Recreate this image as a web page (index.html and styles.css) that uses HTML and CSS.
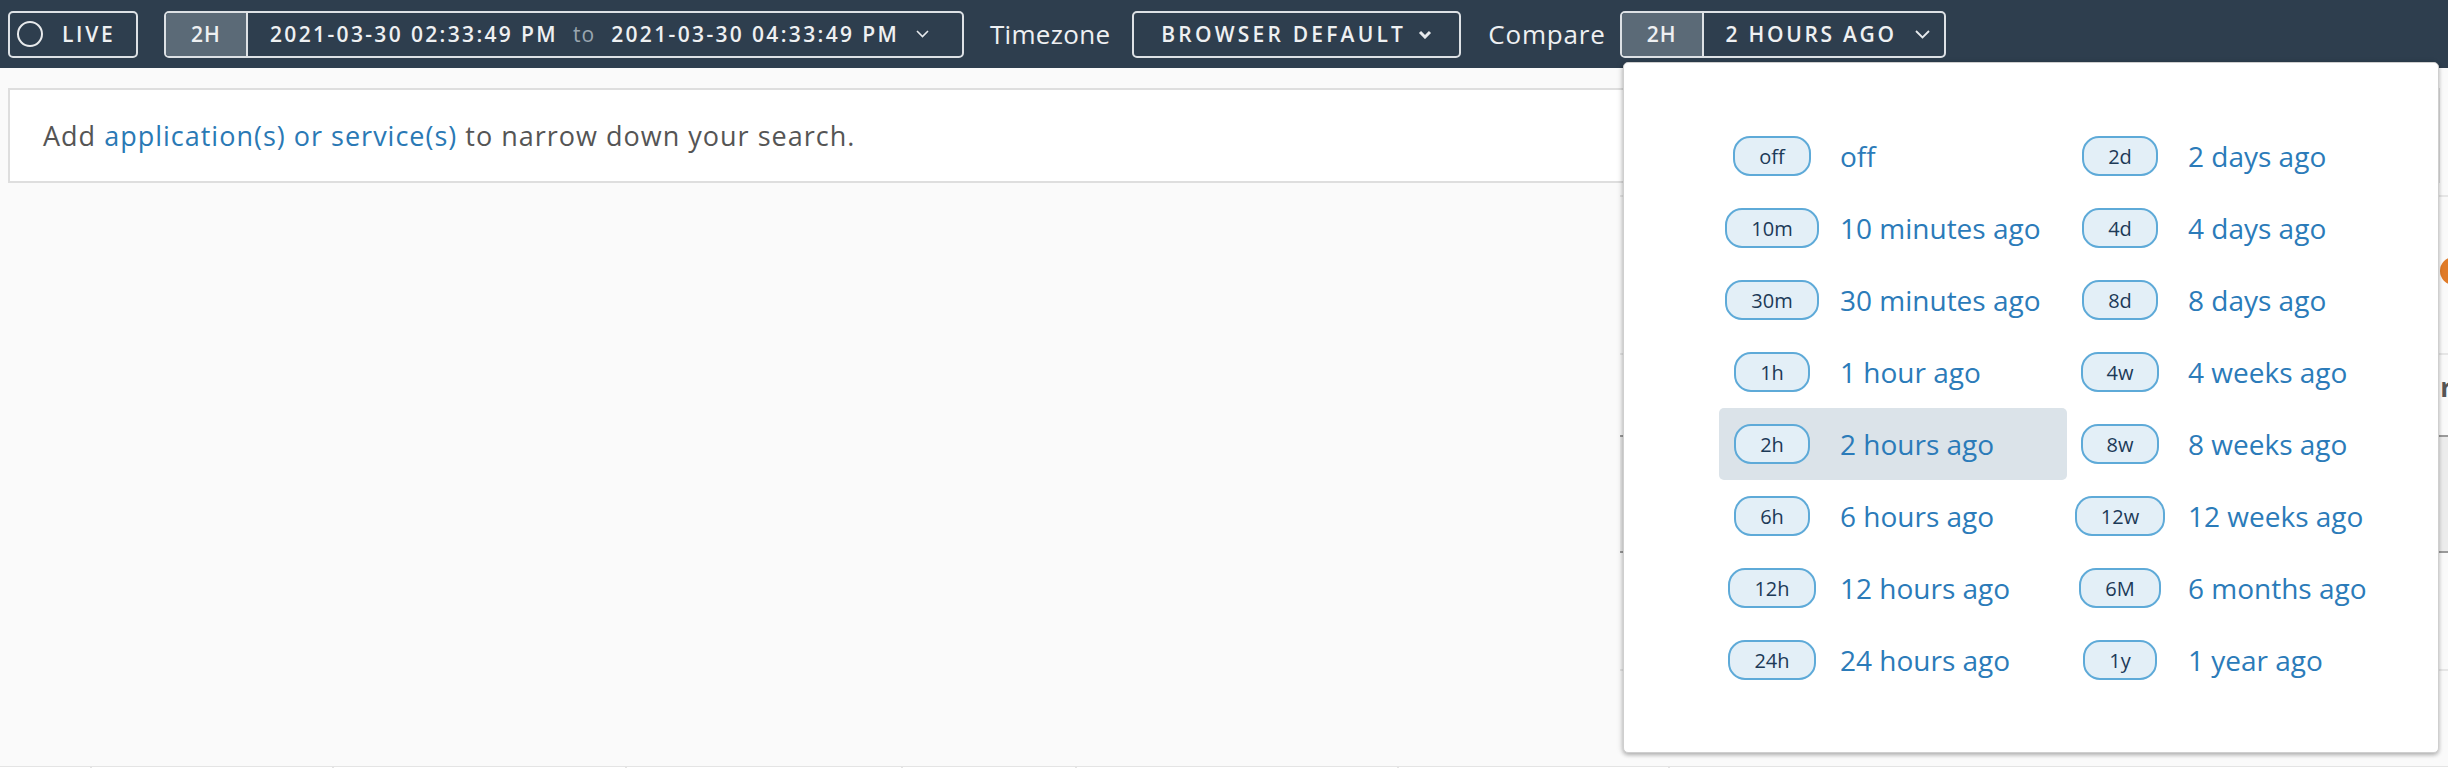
FILE: index.html
```html
<!DOCTYPE html>
<html>
<head>
<meta charset="utf-8">
<link rel="stylesheet" href="styles.css">
</head>
<body>
<header class="topbar">
  <div class="btn live"><span class="live-dot"></span><span class="btn-text">LIVE</span></div>
  <div class="btn seg range">
    <span class="seg-tag">2H</span>
    <span class="seg-main">
      <span class="btn-text date">2021-03-30 02:33:49 PM</span>
      <span class="to">to</span>
      <span class="btn-text date">2021-03-30 04:33:49 PM</span>
      <svg class="chev" width="13" height="8" viewBox="0 0 13 8"><polyline points="1,1 6.5,6.5 12,1" fill="none" stroke="#e6e9ec" stroke-width="1.6"/></svg>
    </span>
  </div>
  <span class="label tz-label">Timezone</span>
  <div class="btn tz">
    <span class="btn-text wide">BROWSER DEFAULT</span>
    <svg class="chev bold" width="14" height="9" viewBox="0 0 14 9"><polyline points="2,2 7,7 12,2" fill="none" stroke="#e6e9ec" stroke-width="3"/></svg>
  </div>
  <span class="label cmp-label">Compare</span>
  <div class="btn seg cmp">
    <span class="seg-tag">2H</span>
    <span class="seg-main">
      <span class="btn-text">2 HOURS AGO</span>
      <svg class="chev" width="15" height="9" viewBox="0 0 15 9"><polyline points="1,1 7.5,7.5 14,1" fill="none" stroke="#e6e9ec" stroke-width="1.8"/></svg>
    </span>
  </div>
</header>

<main class="main">
  <section class="card">
    <p class="card-text">Add <span class="link">application(s) or service(s)</span> to narrow down your search.</p>
  </section>
  <div class="content">
    <div class="filler"></div>
    <div class="side">
      <div class="side-row r1"><span class="dot"></span></div>
      <div class="side-row r2"><span class="peek">r</span></div>
      <div class="side-row r3 head"></div>
      <div class="side-row r4"></div>
      <div class="side-row r5"></div>
    </div>
  </div>
  <div class="foot">
    <span class="fc" style="width:92px"></span>
    <span class="fc" style="width:242px"></span>
    <span class="fc" style="width:293px"></span>
    <span class="fc" style="width:276px"></span>
    <span class="fc" style="width:174px"></span>
    <span class="fc" style="width:322px"></span>
    <span class="fc" style="width:271px"></span>
    <span class="fc last"></span>
  </div>
</main>

<div class="menu">
  <div class="menu-grid">
    <div class="opt"><span class="bw"><span class="badge">off</span></span><span class="opt-label">off</span></div>
    <div class="opt"><span class="bw"><span class="badge">2d</span></span><span class="opt-label">2 days ago</span></div>
    <div class="opt"><span class="bw"><span class="badge">10m</span></span><span class="opt-label">10 minutes ago</span></div>
    <div class="opt"><span class="bw"><span class="badge">4d</span></span><span class="opt-label">4 days ago</span></div>
    <div class="opt"><span class="bw"><span class="badge">30m</span></span><span class="opt-label">30 minutes ago</span></div>
    <div class="opt"><span class="bw"><span class="badge">8d</span></span><span class="opt-label">8 days ago</span></div>
    <div class="opt"><span class="bw"><span class="badge">1h</span></span><span class="opt-label">1 hour ago</span></div>
    <div class="opt"><span class="bw"><span class="badge">4w</span></span><span class="opt-label">4 weeks ago</span></div>
    <div class="opt selected"><span class="bw"><span class="badge">2h</span></span><span class="opt-label">2 hours ago</span></div>
    <div class="opt"><span class="bw"><span class="badge">8w</span></span><span class="opt-label">8 weeks ago</span></div>
    <div class="opt"><span class="bw"><span class="badge">6h</span></span><span class="opt-label">6 hours ago</span></div>
    <div class="opt"><span class="bw"><span class="badge">12w</span></span><span class="opt-label">12 weeks ago</span></div>
    <div class="opt"><span class="bw"><span class="badge">12h</span></span><span class="opt-label">12 hours ago</span></div>
    <div class="opt"><span class="bw"><span class="badge">6M</span></span><span class="opt-label">6 months ago</span></div>
    <div class="opt"><span class="bw"><span class="badge">24h</span></span><span class="opt-label">24 hours ago</span></div>
    <div class="opt"><span class="bw"><span class="badge">1y</span></span><span class="opt-label">1 year ago</span></div>
  </div>
</div>
</body>
</html>
```

FILE: styles.css
```css
* { box-sizing: border-box; }
html, body { margin: 0; padding: 0; }
body {
  width: 2448px;
  height: 768px;
  overflow: hidden;
  background: #fafafa;
  font-family: "Open Sans", "Liberation Sans", sans-serif;
  position: relative;
}

.topbar {
  height: 68px;
  background: #2e3e4e;
  display: flex;
  align-items: center;
  padding-left: 8px;
  color: #eef0f2;
}

.btn {
  height: 47px;
  border: 2px solid #dde1e5;
  border-radius: 5px;
  display: flex;
  align-items: center;
  overflow: hidden;
  flex: none;
}
.btn-text {
  font-size: 21px;
  font-weight: 600;
  letter-spacing: 2.7px;
  color: #eef0f2;
  white-space: nowrap;
}
.btn-text.date { letter-spacing: 2.35px; }
.btn-text.wide { letter-spacing: 3.2px; }

.live { padding: 0 17px 0 7px; width: 130px; }
.live-dot {
  width: 26px; height: 26px;
  border: 2px solid #e8eaec;
  border-radius: 50%;
  margin-right: 19px;
  flex: none;
}

.seg-tag {
  width: 82px;
  height: 100%;
  background: #5b6a77;
  border-right: 2px solid #dde1e5;
  display: flex;
  align-items: center;
  justify-content: center;
  font-size: 21px;
  font-weight: 600;
  letter-spacing: 1px;
  flex: none;
}
.seg-main {
  display: flex;
  align-items: center;
  height: 100%;
}
.range { margin-left: 26px; width: 800px; }
.range .seg-main { padding-left: 22px; }
.to {
  color: #9aa6b0;
  font-size: 21px;
  margin: 0 16px 0 15px;
  letter-spacing: 1px;
}
.range .chev { margin-left: 17px; }

.label {
  font-size: 26px;
  color: #eef0f2;
  letter-spacing: 0.3px;
  flex: none;
}
.tz-label { margin-left: 26px; }
.tz { margin-left: 22px; width: 329px; padding-left: 27px; }
.tz .chev { margin-left: 12px; }
.cmp-label { margin-left: 27px; letter-spacing: 0.8px; }
.cmp { margin-left: 14px; width: 326px; }
.cmp .seg-main { padding-left: 22px; }
.cmp .chev { margin-left: 18px; }

.main { padding: 20px 8px 0 8px; }
.card {
  height: 95px;
  background: #fff;
  border: 2px solid #dedede;
  display: flex;
  align-items: center;
  padding-left: 33px;
}
.card-text {
  margin: 0;
  font-size: 27px;
  letter-spacing: 1px;
  color: #555;
}
.link { color: #2a79b5; }

.content {
  display: flex;
  height: 583px;
  margin: 0 -8px;
}
.filler { flex: 1; }
.side {
  width: 828px;
  padding-top: 12px;
}
.side-row { border-top: 2px solid #e6e6e6; position: relative; }
.r1 { height: 158px; }
.r2 { height: 82px; }
.r3 { height: 116px; border-top-color: #9a9a9a; background: #ececec; }
.r4 { height: 118px; border-top-color: #9a9a9a; }
.r5 { height: 96px; }
.dot {
  position: absolute;
  right: -20px;
  top: 60px;
  width: 28px; height: 28px;
  border-radius: 50%;
  background: #e07b28;
}
.peek {
  position: absolute;
  right: -4px;
  top: 14px;
  font-size: 26px;
  font-weight: 700;
  color: #555;
}

.foot {
  display: flex;
  height: 10px;
  margin: 0 -8px;
  border-top: 1px solid #e4e4e4;
  background: #fff;
}
.fc { border-right: 2px solid #e4e4e4; height: 100%; }
.fc.last { flex: 1; border: none; }

.menu {
  position: absolute;
  left: 1623px;
  top: 62px;
  width: 816px;
  height: 691px;
  background: #fff;
  border: 1px solid #cfcfcf;
  border-radius: 5px;
  box-shadow: 0 2px 4px rgba(0,0,0,0.28), -2px 0 6px rgba(0,0,0,0.08);
  padding: 57px 24px 0 95px;
}
.menu-grid {
  display: grid;
  grid-template-columns: 348px 348px;
  grid-auto-rows: 72px;
}
.opt {
  display: flex;
  align-items: center;
  border-radius: 5px;
}
.opt.selected { background: #dbe3e9; }
.bw {
  width: 106px;
  display: flex;
  justify-content: center;
  flex: none;
}
.badge {
  height: 40px;
  padding: 0 24px;
  border: 2px solid #5eaad8;
  background: #e3eff7;
  border-radius: 17px;
  display: flex;
  align-items: center;
  font-size: 20px;
  color: #1c3a57;
}
.opt-label {
  margin-left: 15px;
  font-size: 28px;
  color: #2b7bb9;
  white-space: nowrap;
}
```
